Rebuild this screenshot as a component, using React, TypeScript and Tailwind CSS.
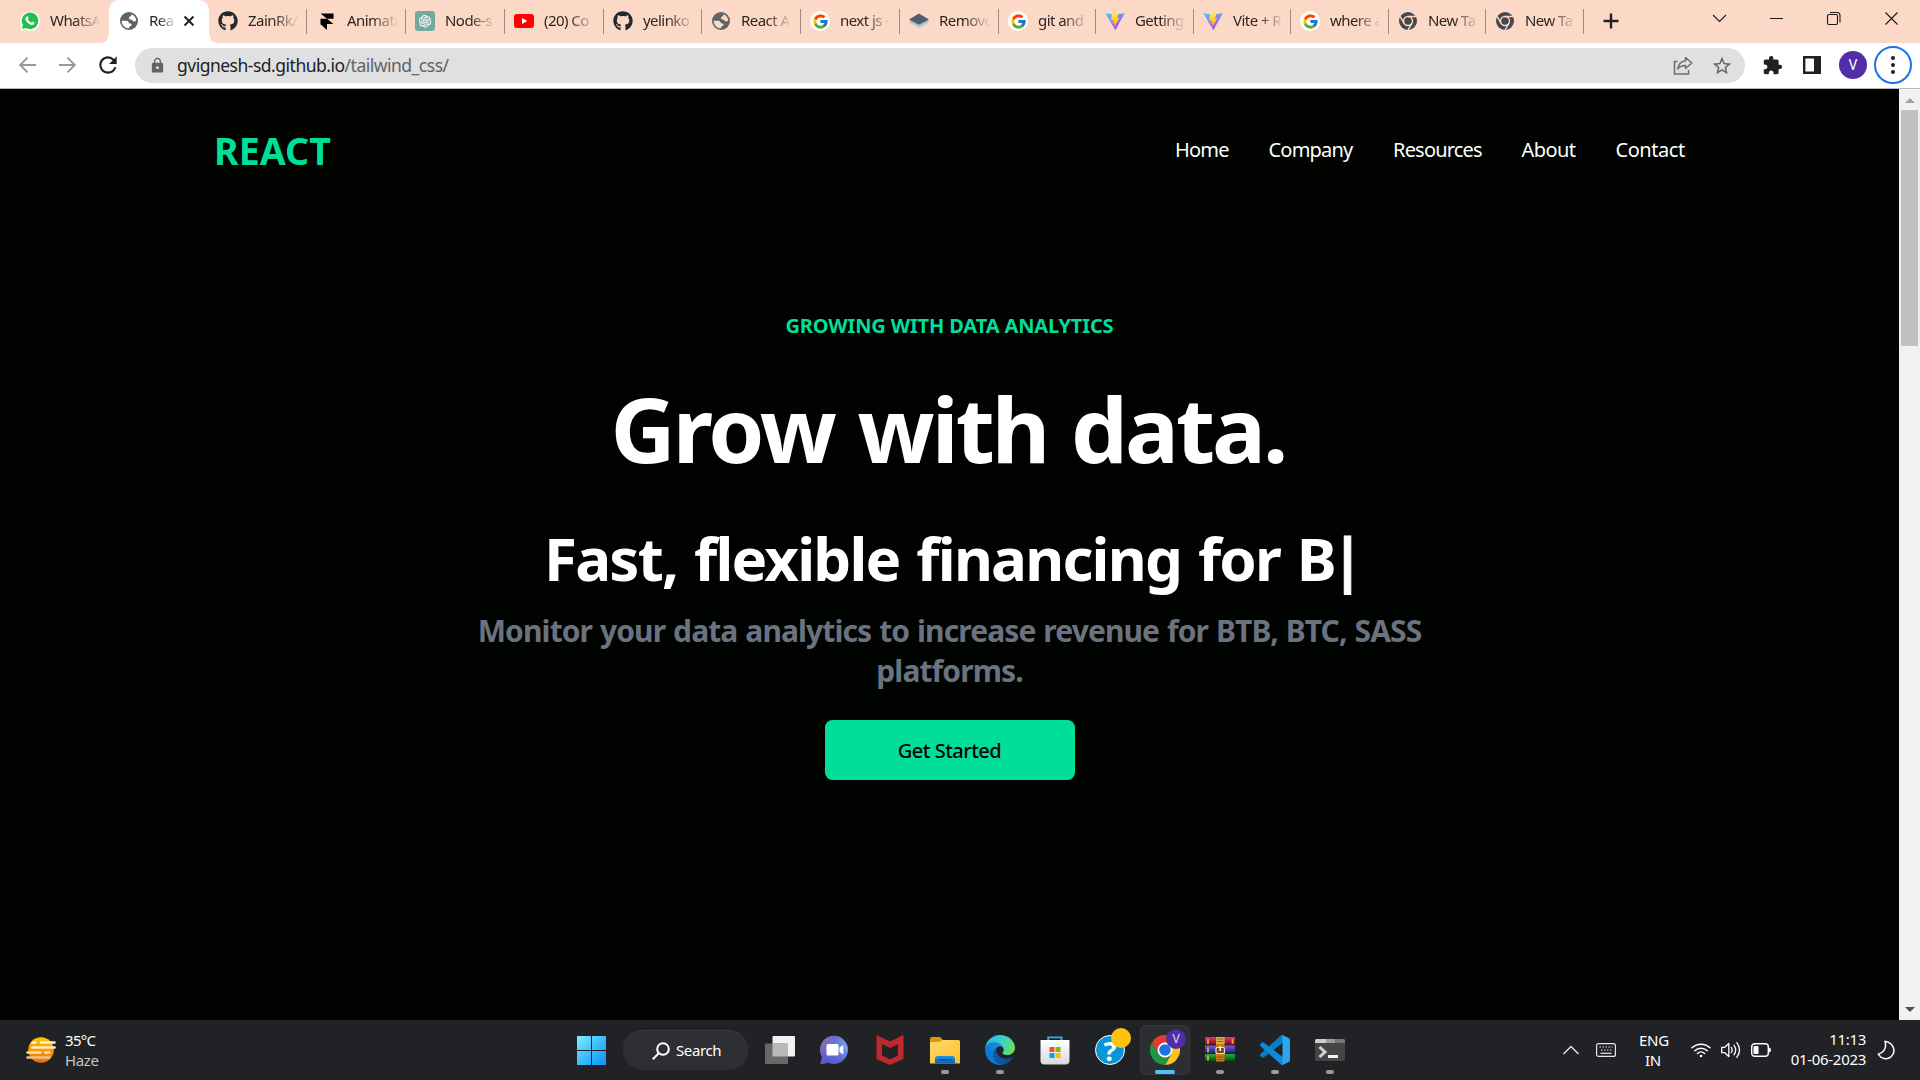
import type { ReactNode } from "react";
import { FaGithub } from "react-icons/fa";
import { FcGoogle } from "react-icons/fc";
import { MdExtension, MdLock, MdRefresh, MdStarBorder } from "react-icons/md";
import { AiOutlineOpenAI } from "react-icons/ai";

/* ---------- favicons ---------- */

const WhatsApp = () => (
  <svg viewBox="0 0 20 20" className="size-5">
    <path d="M0.3 19.8 1.6 15A9.7 9.7 0 1 1 5 18.5Z" fill="#fff" />
    <path d="M1.9 18.1 3 14.3A8.3 8.3 0 1 1 6 17.1Z" fill="#1fbf4f" />
    <path d="M6.700 5.400c.3-.2.9-.3 1.100.1l.8 1.800c.1.5-.4.9-.7 1.300.8 1.500 1.800 2.400 3.400 3.100.4-.4.7-1.100 1.200-1l1.800.9c.3.3.1 1.200-.3 1.600-1 1-2.500.9-3.900.2-2-.9-3.700-2.600-4.500-4.400-.5-1.400 0-2.900 1.100-3.600Z" fill="#fff" />
  </svg>
);

const Framer = () => (
  <svg viewBox="0 0 20 20" className="size-5">
    <path d="M3.500 2.500h13v5.300H10Zm0 5.300H10l6.500 5.300H10V19l-6.500-5.800Z" fill="#000" />
  </svg>
);

const OpenAI = () => (
  <span className="flex size-5 items-center justify-center rounded-[3px] bg-[#74aa9c]">
    <AiOutlineOpenAI className="size-4 text-white" />
  </span>
);

const YouTube = () => (
  <svg viewBox="0 0 20 20" className="size-5">
    <rect y="3" width="20" height="14" rx="3" fill="#f00" />
    <path d="M8 7v6l5.300-3Z" fill="#fff" />
  </svg>
);

const Google = () => (
  <span className="flex size-5 items-center justify-center rounded-full bg-white">
    <FcGoogle className="size-[17px]" />
  </span>
);

const Layers = () => (
  <svg viewBox="0 0 20 20" className="size-5">
    <path d="m0 12 10-4 10 4-10 5Z" fill="#c3cbd3" />
    <path d="m0 10 10-4 10 4-10 5Z" fill="#9fb1bd" />
    <path d="m0 8.500 10-6 10 6-10 5Z" fill="#4f5f6d" />
  </svg>
);

const Vite = () => (
  <svg viewBox="0 0 20 20" className="size-5">
    <defs>
      <linearGradient id="viteBody" x1="0" y1="0" x2="0.6" y2="1">
        <stop offset="0" stopColor="#41d1ff" />
        <stop offset="1" stopColor="#bd34fe" />
      </linearGradient>
      <linearGradient id="viteBolt" x1="0" y1="0" x2="0" y2="1">
        <stop offset="0" stopColor="#ffea83" />
        <stop offset="0.3" stopColor="#ffdd35" />
        <stop offset="1" stopColor="#ffa800" />
      </linearGradient>
    </defs>
    <path d="M0.400 2.200 9.500 3.500 19.600 2.200 10.400 19.300Z" fill="url(#viteBody)" />
    <path d="m13.500.7-6.600 1.300-.8 7.700 2.600-.5-.7 3.600 1.900-.5-1 4.500 5.600-9.700-2.500.4L14 .7Z" fill="url(#viteBolt)" />
  </svg>
);

const ChromeMono = () => (
  <svg viewBox="0 0 20 20" className="size-5">
    <circle cx="10" cy="10" r="9" fill="#45494d" />
    <circle cx="10" cy="10" r="4.500" fill="none" stroke="#fcd9c6" strokeWidth="1.400" />
    <path d="M10 5.500h8M6.100 12.300 2 5.400M13.900 12.300 10 19" stroke="#fcd9c6" strokeWidth="1.400" />
  </svg>
);

const GitHub = () => <FaGithub className="size-5 text-[#24292f]" />;

const Globe = ({ land }: { land: string }) => (
  <svg viewBox="0 0 20 20" className="size-5">
    <circle cx="10" cy="10" r="9" fill="#5f6368" />
    <g fill={land}>
      <path d="M12.300 3.200A7.300 7.300 0 0 1 17.200 9.200q-.7 1.300-2.200 1.200-1.300-.1-1.700-1.200-.5-.8-1.700-.7-1.500 0-1.700-1.300 0-1.500 1.200-1.800 1.300-.3 1.200-1.200Z" />
      <path d="M2.700 9.700h4.800q2 .2 2.200 1.800.2 1 1.400 1 1.600 0 1.600 1.300 0 1-1.100 1.200-1.400.2-1.400 1.200v1.100A7.300 7.300 0 0 1 2.700 9.700Z" />
    </g>
  </svg>
);

type Tab = { icon: ReactNode; title: string; cell: string };

const tabs: Tab[] = [
  { icon: <GitHub />, title: "ZainRk/", cell: "w-[98px] pl-[9px]" },
  { icon: <Framer />, title: "Animati", cell: "w-[99px] pl-[10px]" },
  { icon: <OpenAI />, title: "Node-s", cell: "w-[99px] pl-[9px]" },
  { icon: <YouTube />, title: "(20) Co", cell: "w-[99px] pl-[9px]" },
  { icon: <GitHub />, title: "yelinko", cell: "w-[98px] pl-[9px]" },
  { icon: <Globe land="#fcd9c6" />, title: "React A", cell: "w-[99px] pl-[9px]" },
  { icon: <Google />, title: "next js -", cell: "w-[99px] pl-[9px]" },
  { icon: <Layers />, title: "Remove", cell: "w-[99px] pl-[9px]" },
  { icon: <Google />, title: "git and", cell: "w-[97px] pl-[9px]" },
  { icon: <Vite />, title: "Getting", cell: "w-[98px] pl-[9px]" },
  { icon: <Vite />, title: "Vite + R", cell: "w-[97px] pl-[9px]" },
  { icon: <Google />, title: "where a", cell: "w-[98px] pl-[9px]" },
  { icon: <ChromeMono />, title: "New Ta", cell: "w-[97px] pl-[9px]" },
  { icon: <ChromeMono />, title: "New Ta", cell: "w-[98px] pl-[9px]" },
];

function TabStrip() {
  return (
    <div className="flex h-[43px] bg-[#fcd9c6] text-[15px] tracking-[-0.55px] text-[#2b2523]">
      <div className="flex h-[42px] w-[109px] items-center pl-5">
        <WhatsApp />
        <TabTitle>WhatsA</TabTitle>
      </div>
      <div className="relative flex w-[100px] items-center rounded-t-[10px] bg-white pl-[10px]">
        <CornerCurve side="left" />
        <CornerCurve side="right" />
        <div className="flex h-full items-center pb-px">
          <Globe land="#ffffff" />
          <span className="mb-[2px] ml-[10px] w-[25px] leading-5 whitespace-nowrap [mask-image:linear-gradient(to_right,black_40%,transparent_110%)]">
            Rea
          </span>
          <svg viewBox="0 0 12 12" className="ml-[9px] size-3">
            <path d="m1.500 1.500 9 9m0-9-9 9" stroke="#202124" strokeWidth="2" />
          </svg>
        </div>
      </div>
      {tabs.map((t, i) => (
        <div key={i} className={`flex h-[42px] shrink-0 items-center ${t.cell}`}>
          {t.icon}
          <TabTitle>{t.title}</TabTitle>
          <span className="mt-px ml-auto h-[25px] w-px bg-[#a08a80]" />
        </div>
      ))}
      <svg viewBox="0 0 16 16" className="mt-[13px] ml-[19px] size-4 shrink-0">
        <path d="M8 .5v15M.5 8h15" stroke="#202124" strokeWidth="2.400" />
      </svg>
      <svg viewBox="0 0 200 20" fill="none" stroke="#1a1a1a" strokeWidth="1.100" className="mt-[9px] mr-[15px] ml-auto h-5 w-[200px]">
        <path d="m8 6 6.500 6.500L21 6M65 9.500h13" />
        <rect x="122.500" y="5.500" width="10" height="10" rx="1.500" />
        <path d="M125 3.500h7q3 0 3 3v7M180.500 3.500l12 12m0-12-12 12" />
      </svg>
    </div>
  );
}

function TabTitle({ children }: { children: ReactNode }) {
  return (
    <span className="mb-[2px] ml-[10px] w-[50px] shrink-0 leading-5 whitespace-nowrap [mask-image:linear-gradient(to_right,black_50%,transparent_102%)]">
      {children}
    </span>
  );
}

function CornerCurve({ side }: { side: "left" | "right" }) {
  return (
    <svg viewBox="0 0 10 10" className={side === "left" ? "absolute bottom-0 -left-[10px] size-[10px]" : "absolute -right-[10px] bottom-0 size-[10px] -scale-x-100"}>
      <path d="M10 0v10H0Q10 10 10 0Z" fill="#fff" />
    </svg>
  );
}

function Toolbar() {
  return (
    <div className="flex h-[46px] items-center border-b border-[#b9b9b9] bg-white">
      <svg viewBox="0 0 60 18" fill="none" stroke="#98999b" strokeWidth="1.900" className="mb-px ml-[18px] h-[18px] w-[60px]">
        <path d="M18 9H2.500M9.500 1.700 2.200 9l7.300 7.300M41 9h15.500M49.500 1.700 56.800 9l-7.300 7.300" />
      </svg>
      <MdRefresh className="mb-px ml-[17px] size-[26px] text-[#202124]" />
      <div className="ml-[14px] flex h-[35px] w-[1610px] items-center rounded-full bg-[#e0e0e0] pr-[11px] pl-[14px]">
        <MdLock className="mb-px size-[17px] text-[#5f6368]" />
        <span className="mb-[2px] ml-[11px] text-[17.5px] leading-6 tracking-[-0.5px] whitespace-nowrap text-[#202124]">
          gvignesh-sd.github.io<span className="text-[#5f6368]">/tailwind_css/</span>
        </span>
        <svg viewBox="0 0 20 20" fill="none" stroke="#6a6d71" strokeWidth="1.500" className="ml-auto size-5">
          <path d="M4.500 5.500H1.500V18H15.500V14" />
          <path d="M12.500 1.500 18.800 7l-6.300 5.500V9.600C9 9.500 6.800 10.500 4.700 13 5.300 8.500 8 5.300 12.500 4.700Z" strokeLinejoin="round" />
        </svg>
        <MdStarBorder className="mr-px ml-[18px] size-[22px] text-[#5f6368]" />
      </div>
      <MdExtension className="mb-px ml-[17px] size-[21px] text-[#202124]" />
      <svg viewBox="0 0 18 18" className="mb-px ml-[20px] size-[18px]">
        <path d="M1.200 1.200h15.600v15.600H1.200Z" fill="#fff" stroke="#202124" strokeWidth="2.400" />
        <path d="M11 0h7v18h-7Z" fill="#202124" />
      </svg>
      <span className="mb-px ml-[18px] flex size-7 items-center justify-center rounded-full bg-[#512da8] font-[Roboto] text-sm text-white">V</span>
      <span className="mb-px ml-[7px] flex size-[38px] flex-col items-center justify-center gap-[3px] rounded-full border-2 border-[#1a73e8]">
        <i className="size-1 rounded-full bg-[#202124]" />
        <i className="size-1 rounded-full bg-[#202124]" />
        <i className="size-1 rounded-full bg-[#202124]" />
      </span>
    </div>
  );
}

function Page() {
  return (
    <div className="flex h-[931px]">
      <main className="flex-1 bg-[#000300]">
        <header className="mx-auto flex h-[120px] w-[1469px] items-center justify-between text-white">
          <h1 className="mt-[3px] -ml-px text-[37.5px] leading-[50px] font-bold tracking-[0.1px] text-[#00df9a]">REACT</h1>
          <nav className="mt-[2px] flex text-[20px] leading-[30px]">
            <a className="w-[93.500px] tracking-[-0.8px]">Home</a>
            <a className="w-[124.500px] tracking-[-0.8px]">Company</a>
            <a className="w-[128.500px] tracking-[-0.8px]">Resources</a>
            <a className="w-[94px] tracking-[-0.6px]">About</a>
            <a className="w-[68.500px] tracking-[-0.45px]">Contact</a>
          </nav>
        </header>
        <section className="flex flex-col items-center pt-[102px] text-center font-bold text-white">
          <p className="text-[20px] leading-[30px] tracking-[-0.13px] text-[#00df9a]">GROWING WITH DATA ANALYTICS</p>
          <h2 className="mt-[42px] mr-[3px] text-[90px] leading-[90px] tracking-[-2.9px] [word-spacing:3px]">Grow with data.</h2>
          <p className="mt-[55px] flex text-[60px] leading-[60px] tracking-[-1.800px] whitespace-nowrap [word-spacing:3px]">
            Fast, flexible financing for B
            <span className="ml-[8px] w-[12px] [-webkit-text-stroke:1px_white] [text-indent:-12px]">|</span>
          </p>
          <p className="mt-[23px] w-[1000px] text-[30px] leading-10 tracking-[-0.9px] text-[#6b7280] [word-spacing:1px]">
            Monitor your data analytics to increase revenue for BTB, BTC, SASS platforms.
          </p>
          <button className="mt-[29px] h-[60px] w-[250px] rounded-[7.500px] bg-[#00df9a] pt-[2px] text-[20px] font-medium tracking-[-0.5px] text-black">
            Get Started
          </button>
        </section>
      </main>
      <aside className="flex w-[21px] flex-col items-center bg-[#f1f1f1]">
        <svg viewBox="0 0 10 5" className="mt-[9px] h-[5px] w-[10px]"><path d="M0 5 5 0l5 5Z" fill="#a3a3a3" /></svg>
        <div className="mt-[7px] h-[236px] w-[17px] bg-[#c1c1c1]" />
        <svg viewBox="0 0 10 5" className="mt-auto mb-2 h-[5px] w-[10px]"><path d="M0 0 5 5l5-5Z" fill="#505050" /></svg>
      </aside>
    </div>
  );
}

/* ---------- taskbar icons, each on a 30×30 grid ---------- */

const TaskView = () => (
  <svg viewBox="0 0 30 30" className="size-[30px]">
    <rect x="7.500" y="1" width="22.500" height="20.500" rx="1" fill="#f2f2f2" />
    <rect x="0" y="8.500" width="23" height="20.500" rx="1" fill="#686868" />
    <path d="M7.500 8.500H23v13H7.500Z" fill="#b9b9b9" />
  </svg>
);

const Chat = () => (
  <svg viewBox="0 0 30 30" className="size-[30px]">
    <defs>
      <linearGradient id="chat" x1="0" y1="0" x2="1" y2="0.400">
        <stop offset="0" stopColor="#9a63a8" />
        <stop offset="0.500" stopColor="#6b6ed0" />
        <stop offset="1" stopColor="#7ba4ee" />
      </linearGradient>
      <linearGradient id="chatShade" x1="0" y1="0" x2="0" y2="1">
        <stop offset="0.400" stopColor="#5558cf" stopOpacity="0" />
        <stop offset="1" stopColor="#5558cf" />
      </linearGradient>
    </defs>
    <path d="M0.500 29 2 22A14 14 0 1 1 9 27.800Z" fill="url(#chat)" />
    <path d="M0.500 29 2 22A14 14 0 1 1 9 27.800Z" fill="url(#chatShade)" />
    <rect x="6.500" y="9" width="12" height="11.500" rx="1.500" fill="#fff" />
    <path d="m19.500 12.500 3.800-2.500v9.500l-3.800-2.500Z" fill="#fff" />
  </svg>
);

const McAfee = () => (
  <svg viewBox="0 0 30 30" className="size-[30px]">
    <path d="M1.500 0 15 6.500 28.500 0v24L15 30 1.500 24Z" fill="#c0282e" />
    <path d="m7 9 8 4 8-4v11.500L15 24.500 7 20.500Z" fill="#212226" />
  </svg>
);

const Explorer = () => (
  <svg viewBox="0 0 30 30" className="size-[30px]">
    <defs>
      <linearGradient id="folder" x1="0" y1="0" x2="1" y2="1">
        <stop offset="0" stopColor="#ffd96b" />
        <stop offset="1" stopColor="#ffc02a" />
      </linearGradient>
      <linearGradient id="folderClip" x1="0" y1="0" x2="0" y2="1">
        <stop offset="0" stopColor="#1f95e6" />
        <stop offset="1" stopColor="#0a63b4" />
      </linearGradient>
    </defs>
    <path d="M0 4q0-2 2-2h8l3 3h16v6H0Z" fill="#dc9a04" />
    <path d="M0 7h9l4-2h15.500Q30 5 30 6.500v21.500q0 .5-.5.500H.5Q0 28.500 0 28Z" fill="url(#folder)" />
    <path d="M5 28.500V24q0-3 3-3h14q3 0 3 3v4.500Z" fill="url(#folderClip)" />
    <path d="M8.500 24.700h13" stroke="#084f90" strokeWidth="1.300" />
  </svg>
);

const Edge = () => (
  <svg viewBox="0 0 256 256" className="size-[30px]">
    <defs>
      <linearGradient id="edgeA" x1="0.200" y1="0.600" x2="1" y2="0.600">
        <stop offset="0" stopColor="#0c59a4" />
        <stop offset="1" stopColor="#114a8b" />
      </linearGradient>
      <linearGradient id="edgeB" x1="0.900" y1="0" x2="0.200" y2="1">
        <stop offset="0" stopColor="#1b9de2" />
        <stop offset="0.600" stopColor="#0d7bd6" />
        <stop offset="1" stopColor="#0078d4" />
      </linearGradient>
      <linearGradient id="edgeC" x1="0" y1="0.300" x2="1" y2="0.600">
        <stop offset="0" stopColor="#2cb5e4" />
        <stop offset="0.500" stopColor="#36cfd0" />
        <stop offset="1" stopColor="#66e455" />
      </linearGradient>
    </defs>
    <path d="M231 190.500c-3.400 1.800-6.900 3.400-10.500 4.700a101.700 101.700 0 0 1-35.800 6.400c-47.200 0-88.300-32.400-88.300-74.200a31.600 31.600 0 0 1 16.500-27.300c-42.700 1.800-53.600 46.300-53.600 72.300 0 73.700 67.900 81.200 82.500 81.200 7.900 0 19.800-2.300 27-4.600l1.300-.4a128.300 128.300 0 0 0 66.600-52.800 4 4 0 0 0-5.700-5.300z" fill="url(#edgeA)" />
    <path d="M105.700 241.400a79.200 79.200 0 0 1-22.700-21.300 80.700 80.700 0 0 1 29.900-120c3.200-1.500 8.500-4.100 15.600-4a32.400 32.400 0 0 1 25.700 13 31.900 31.900 0 0 1 6.300 18.700c0-.2 24.500-79.600-80-79.600-43.900 0-80 41.600-80 78.200a130.200 130.200 0 0 0 12.100 56 128 128 0 0 0 156.400 67 75.500 75.500 0 0 1-62.800-8z" fill="url(#edgeB)" />
    <path d="M152.300 148.900c-.9 1-3.400 2.500-3.400 5.700 0 2.600 1.700 5.100 4.700 7.200 14.400 10 41.500 8.700 41.600 8.700a59.600 59.600 0 0 0 30.300-8.300 61.400 61.400 0 0 0 30.400-52.900c.3-22.400-8-37.300-11.300-43.900C223.500 23.900 177.700 0 128 0A128 128 0 0 0 0 126.200c.5-36.500 36.800-66 80-66 3.500 0 23.500.3 42 10a72.600 72.600 0 0 1 30.900 29.300c6.100 10.600 7.200 24.100 7.200 29.500s-2.700 13.300-7.800 19.900z" fill="url(#edgeC)" />
  </svg>
);

const Store = () => (
  <svg viewBox="0 0 30 30" className="size-[30px]">
    <defs>
      <linearGradient id="bag" x1="0" y1="0" x2="0" y2="1">
        <stop offset="0" stopColor="#ffffff" />
        <stop offset="1" stopColor="#d9d9d9" />
      </linearGradient>
    </defs>
    <path d="M8.200 6V2.300h13.300V6" fill="none" stroke="#28b4ea" strokeWidth="1.800" />
    <path d="M.5 5h29v20.500q0 4-4 4h-21q-4 0-4-4Z" fill="url(#bag)" />
    <path d="M9.500 12h5v5h-5Z" fill="#f25022" />
    <path d="M15.500 12h5v5h-5Z" fill="#7fba00" />
    <path d="M9.500 18h5v5h-5Z" fill="#00a4ef" />
    <path d="M15.500 18h5v5h-5Z" fill="#ffb900" />
  </svg>
);

const Help = () => (
  <span className="relative flex size-[30px] items-center justify-center rounded-full border-[1.500px] border-white bg-[#0796d8] text-[27px] leading-none font-bold text-white">
    ?
    <i className="absolute -top-[8px] -right-[7px] size-5 rounded-full bg-[#ffc20e]" />
  </span>
);

const Chrome = () => (
  <span className="relative">
    <svg viewBox="0 0 30 30" className="size-[30px]">
      <path d="M15 15 2 7.500A15 15 0 0 1 28 7.500Z" fill="#e33b2e" />
      <path d="M15 7.500h13A15 15 0 0 1 15 30l6.500-11.200Z" fill="#fcc31e" />
      <path d="M2 7.500A15 15 0 0 0 15 30l6.500-11.200H15L8.500 18.700Z" fill="#229342" />
      <path d="M2 7.500 8.500 18.700 15 15V7.500Z" fill="#e33b2e" />
      <circle cx="15" cy="15" r="7.500" fill="#fff" />
      <circle cx="15" cy="15" r="5.800" fill="#1a73e8" />
    </svg>
    <i className="absolute -top-[6px] -right-[6px] flex size-5 items-center justify-center rounded-full bg-[#512da8] font-[Roboto] text-[12px] text-[#e0d4ff] not-italic">V</i>
  </span>
);

const WinRar = () => (
  <svg viewBox="0 0 30 30" className="size-[30px]">
    <defs>
      <linearGradient id="rarR" x1="0" y1="0" x2="0" y2="1"><stop offset="0" stopColor="#d83a5c" /><stop offset="0.600" stopColor="#a01a3a" /><stop offset="1" stopColor="#4e0a1b" /></linearGradient>
      <linearGradient id="rarB" x1="0" y1="0" x2="0" y2="1"><stop offset="0" stopColor="#6a64cc" /><stop offset="0.600" stopColor="#38359a" /><stop offset="1" stopColor="#151345" /></linearGradient>
      <linearGradient id="rarG" x1="0" y1="0" x2="0" y2="1"><stop offset="0" stopColor="#2fa83d" /><stop offset="0.600" stopColor="#0f7522" /><stop offset="1" stopColor="#06380e" /></linearGradient>
    </defs>
    <rect y="2" width="30" height="8.500" fill="url(#rarR)" />
    <rect y="10.500" width="30" height="8.500" fill="url(#rarB)" />
    <rect y="19" width="30" height="7.500" fill="url(#rarG)" />
    <path d="M3 4v5M3 12.500v5M3 20.500v5M27.500 4v5" stroke="#e8b52c" strokeWidth="1.600" />
    <path d="M11 2h8.500v24.500H11Z" fill="#c9761f" />
    <path d="M11 2h8.500v7H11Z" fill="#dcae3f" />
    <path d="M12 4h6.500M12 6.500h6.500M12 22h6.500M12 24.500h6.500" stroke="#8d4d10" strokeWidth=".8" />
    <rect x="11" y="12.500" width="8.500" height="6" rx="1" fill="#7c4a18" stroke="#ddd" strokeWidth="1.200" />
    <path d="M15.200 11v5" stroke="#fff" strokeWidth="1.500" />
  </svg>
);

const VSCode = () => (
  <svg viewBox="0 0 100 100" className="size-[30px]">
    <path d="M96.500 10.800 75.900.9a6.200 6.200 0 0 0-7.100 1.200L1.300 63.600a4.200 4.200 0 0 0 0 6.200l5.500 5a4.200 4.200 0 0 0 5.300.2L93.400 13.300c2.700-2.100 6.600-.1 6.600 3.300v-.2c0-2.400-1.400-4.600-3.500-5.600Z" fill="#0a7cc4" />
    <path d="M96.500 89.200 75.900 99.100a6.200 6.200 0 0 1-7.100-1.200L1.300 36.400a4.200 4.200 0 0 1 0-6.200l5.500-5a4.200 4.200 0 0 1 5.300-.2l81.300 61.700c2.700 2.100 6.600.1 6.600-3.300v.2c0 2.400-1.400 4.600-3.500 5.600Z" fill="#1088d4" />
    <path d="M75.900 99.100a6.200 6.200 0 0 1-7.100-1.200c2.300 2.300 6.200.7 6.200-2.600V4.700c0-3.300-3.900-4.900-6.200-2.600a6.200 6.200 0 0 1 7.100-1.200l20.600 9.900c2.200 1 3.500 3.200 3.500 5.600v67.200c0 2.400-1.400 4.600-3.500 5.600Z" fill="#2aa5f0" />
  </svg>
);

const Terminal = () => (
  <svg viewBox="0 0 30 30" className="size-[30px]">
    <rect y="4" width="30" height="22" rx="1.500" fill="#454545" />
    <path d="M0 8V5.500Q0 4 1.500 4H11v4Z" fill="#cfcfcf" />
    <path d="M11 4h9.500v4H11Z" fill="#9d9d9d" />
    <path d="M20.500 4h8Q30 4 30 5.500V8h-9.500Z" fill="#767676" />
    <path d="m4.500 12 5.500 5-5.500 5" fill="none" stroke="#d2d2d2" strokeWidth="3" />
    <path d="M13 21.500h10" stroke="#f2f2f2" strokeWidth="3" />
  </svg>
);

const apps: { icon: ReactNode; state?: "running" | "active" }[] = [
  { icon: <TaskView /> },
  { icon: <Chat /> },
  { icon: <McAfee /> },
  { icon: <Explorer />, state: "running" },
  { icon: <Edge />, state: "running" },
  { icon: <Store /> },
  { icon: <Help /> },
  { icon: <Chrome />, state: "active" },
  { icon: <WinRar />, state: "running" },
  { icon: <VSCode />, state: "running" },
  { icon: <Terminal />, state: "running" },
];

function Taskbar() {
  return (
    <footer className="flex h-[60px] items-center bg-[#212226] text-[15px] leading-5 text-white">
      <div className="flex w-[577px] items-center pl-[26px]">
        <svg viewBox="0 0 30 26" className="h-[26px] w-[30px]">
          <defs>
            <linearGradient id="sun" x1="0" y1="0" x2="0" y2="1">
              <stop offset="0" stopColor="#ffc800" />
              <stop offset="1" stopColor="#f06a10" />
            </linearGradient>
          </defs>
          <circle cx="15" cy="13" r="12.800" fill="url(#sun)" />
          <g strokeWidth="2.600" strokeLinecap="round">
            <path d="M6.500 5.500h3M15 5.500h13.500" stroke="#fff3c4" />
            <path d="M6.500 10.500h22" stroke="#ffeebd" />
            <path d="M1.500 15.500h13M19 15.500h4.500" stroke="#ffe0a0" />
            <path d="M1.500 20.500h22" stroke="#e9c58c" />
          </g>
        </svg>
        <div className="-mt-px ml-[9px]">
          <div className="tracking-[-0.7px]">35°C</div>
          <div className="tracking-[-0.4px] text-[#c4c4c4]">Haze</div>
        </div>
      </div>
      <svg viewBox="0 0 29 29" className="size-[29px]">
        <defs>
          <linearGradient id="win" gradientUnits="userSpaceOnUse" x1="0" y1="0" x2="29" y2="29">
            <stop offset="0" stopColor="#7df0ff" />
            <stop offset="0.500" stopColor="#3dbdfb" />
            <stop offset="1" stopColor="#0a92f6" />
          </linearGradient>
        </defs>
        <path d="M0 0h14v14H0ZM15 0h14v14H15ZM0 15h14v14H0ZM15 15h14v14H15Z" fill="url(#win)" />
      </svg>
      <div className="ml-[17px] flex h-10 w-[125px] items-center rounded-full border-t border-[#3c3d41] bg-[#2e2f33] pl-[29px]">
        <svg viewBox="0 0 18 18" fill="none" stroke="#fff" strokeWidth="2" className="size-[18px]">
          <circle cx="11" cy="7" r="5.800" />
          <path d="M6.700 11.300.8 17.200" />
        </svg>
        <span className="mb-[2px] ml-[6px] tracking-[-0.4px]">Search</span>
      </div>
      <div className="ml-[4.500px] flex">
        {apps.map((a, i) => (
          <div
            key={i}
            className={
              a.state === "active"
                ? "relative mx-[2.500px] flex size-[50px] items-center justify-center rounded-md border border-[#38393d] bg-[#2d2e32]"
                : "relative mx-[2.500px] flex size-[50px] items-center justify-center"
            }
          >
            {a.icon}
            {a.state === "running" && <i className="absolute bottom-px h-1 w-2 rounded-full bg-[#9a9a9a]" />}
            {a.state === "active" && <i className="absolute bottom-0 h-1 w-5 rounded-full bg-[#4cc2ff]" />}
          </div>
        ))}
      </div>
      <svg viewBox="0 0 16 10" fill="none" stroke="#e6e6e6" strokeWidth="1.400" className="ml-auto h-[10px] w-4">
        <path d="M.5 9 8 1.500 15.500 9" />
      </svg>
      <svg viewBox="0 0 20 14" fill="none" stroke="#e6e6e6" strokeWidth="1.200" className="ml-[17px] h-[14px] w-5">
        <rect x=".6" y=".6" width="18.800" height="12.800" rx="2" />
        <path d="M3.500 4h13M5 7h10.500" strokeDasharray="1.500 1.500" />
        <path d="M4.500 10.300h11" />
      </svg>
      <div className="-mt-px mr-px ml-[23px] w-7 text-center tracking-[-0.3px]">
        <div>ENG</div>
        <div>IN</div>
      </div>
      <svg viewBox="0 0 20 16" fill="none" stroke="#fff" strokeWidth="1.500" strokeLinecap="round" className="ml-[23px] h-4 w-5">
        <path d="M1 5.800a13 13 0 0 1 18 0M3.800 8.800a9 9 0 0 1 12.400 0M6.500 11.500a5 5 0 0 1 7 0" />
        <circle cx="10" cy="14" r="1.300" fill="#fff" stroke="none" />
      </svg>
      <svg viewBox="0 0 20 18" fill="none" stroke="#fff" strokeWidth="1.300" strokeLinejoin="round" strokeLinecap="round" className="ml-[10px] h-[18px] w-5">
        <path d="M.7 6.300h3L7.800 2.500v13L3.700 11.700h-3ZM10.300 6.500q1.700 2.500 0 5M13 4.300q3.400 4.700 0 9.400M15.800 1.700q5.500 7.300 0 14.600" />
      </svg>
      <svg viewBox="0 0 20 14" className="ml-[10px] h-[14px] w-5">
        <rect x=".7" y=".7" width="16.600" height="12.600" rx="3" fill="none" stroke="#fff" strokeWidth="1.400" />
        <rect x="2.500" y="3" width="5" height="8" rx=".8" fill="#fff" />
        <path d="M18 4.500q2 .3 2 2.500t-2 2.500Z" fill="#fff" />
      </svg>
      <div className="-mt-[3px] w-[95px] text-right tracking-[-0.3px]">
        <div>11:13</div>
        <div>01-06-2023</div>
      </div>
      <svg viewBox="0 0 18 20" fill="none" stroke="#fff" strokeWidth="1.500" strokeLinejoin="round" className="mr-[25px] ml-[11px] h-5 w-[18px]">
        <path d="M8 1.300C9.800 7.500 7.500 12 1.300 14.300 4.300 18.800 9.800 20.200 14 16.800 19.500 12 17 3 8 1.300Z" />
      </svg>
    </footer>
  );
}

export default function App() {
  return (
    <div className="h-[1080px] w-[1920px] overflow-hidden font-['Noto_Sans',sans-serif]">
      <TabStrip />
      <Toolbar />
      <Page />
      <Taskbar />
    </div>
  );
}
